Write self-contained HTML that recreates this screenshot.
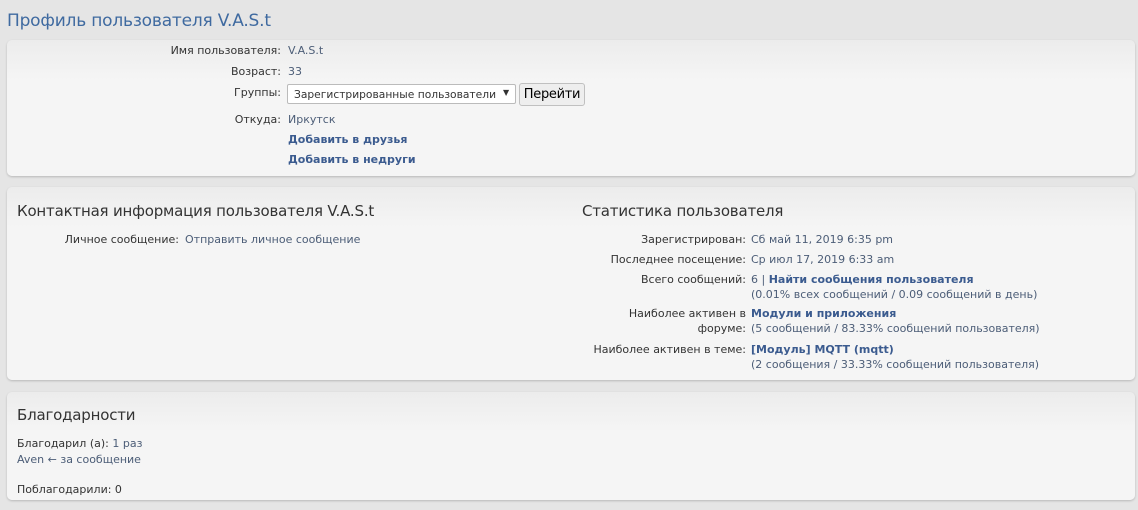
<!DOCTYPE html>
<html><head><meta charset="utf-8"><style>
*{margin:0;padding:0;box-sizing:border-box}
body{width:1138px;height:510px;background:#e5e5e5;font-family:"DejaVu Sans","Liberation Sans",sans-serif;font-size:11px;color:#333;position:relative;overflow:hidden}
.t{position:absolute;white-space:nowrap}
.p{position:absolute;left:7px;width:1128px;border-radius:5px;background:linear-gradient(#ececec,#f5f5f5 40px);box-shadow:0 1px 2px rgba(0,0,0,.2)}
.r{text-align:right}
.v{color:#4c5d77}
.b{color:#3b5b8f;font-weight:bold}
h1{position:absolute;left:7px;top:11px;font-size:17px;font-weight:normal;color:#3f6aa0;white-space:nowrap;letter-spacing:-0.2px}
.h{font-size:15px;color:#333;letter-spacing:-0.2px}
.btn{position:absolute;left:519px;top:83px;width:66px;height:23px;border:1px solid #c0c0c0;border-radius:3px;background:#eee;font-size:13px;line-height:21px;text-align:center;color:#000;letter-spacing:-0.3px}
</style></head><body>
<h1>Профиль пользователя V.A.S.t</h1>
<div class="p" style="top:40px;height:136px"></div>
<div class="p" style="top:187px;height:193px"></div>
<div class="p" style="top:392px;height:108px"></div>

<div class="t r" style="right:857px;top:44px">Имя пользователя:</div><div class="t v" style="left:288px;top:44px">V.A.S.t</div>
<div class="t r" style="right:857px;top:65px">Возраст:</div><div class="t v" style="left:288px;top:65px">33</div>
<div class="t r" style="right:857px;top:86px">Группы:</div>
<div style="position:absolute;left:287px;top:84px;width:229px;height:20px;background:#fff;border:1px solid #bbb;border-radius:2px"></div>
<div class="t" style="left:294px;top:88px;color:#333;font-size:10.7px">Зарегистрированные пользователи</div>
<div class="t" style="left:503px;top:88px;font-size:8px;color:#333">▼</div>
<div class="btn">Перейти</div>
<div class="t r" style="right:857px;top:113px">Откуда:</div><div class="t v" style="left:288px;top:113px">Иркутск</div>
<div class="t b" style="left:288px;top:133px">Добавить в друзья</div>
<div class="t b" style="left:288px;top:153px">Добавить в недруги</div>

<div class="t h" style="left:17px;top:202px">Контактная информация пользователя V.A.S.t</div>
<div class="t r" style="right:959px;top:233px">Личное сообщение:</div><div class="t v" style="left:185px;top:233px">Отправить личное сообщение</div>

<div class="t h" style="left:582px;top:202px">Статистика пользователя</div>
<div class="t r" style="right:392px;top:233px">Зарегистрирован:</div><div class="t v" style="left:751px;top:233px">Сб май 11, 2019 6:35 pm</div>
<div class="t r" style="right:392px;top:253px">Последнее посещение:</div><div class="t v" style="left:751px;top:253px">Ср июл 17, 2019 6:33 am</div>
<div class="t r" style="right:392px;top:273px">Всего сообщений:</div><div class="t v" style="left:751px;top:273px">6 | <span class="b">Найти сообщения пользователя</span></div>
<div class="t v" style="left:751px;top:288px">(0.01% всех сообщений / 0.09 сообщений в день)</div>
<div class="t r" style="right:392px;top:307px">Наиболее активен в</div><div class="t b" style="left:751px;top:307px">Модули и приложения</div>
<div class="t r" style="right:392px;top:322px">форуме:</div><div class="t v" style="left:751px;top:322px">(5 сообщений / 83.33% сообщений пользователя)</div>
<div class="t r" style="right:392px;top:343px">Наиболее активен в теме:</div><div class="t b" style="left:751px;top:343px">[Модуль] MQTT (mqtt)</div>
<div class="t v" style="left:751px;top:358px">(2 сообщения / 33.33% сообщений пользователя)</div>

<div class="t h" style="left:17px;top:406px">Благодарности</div>
<div class="t" style="left:17px;top:437px">Благодарил (а): <span class="v">1 раз</span></div>
<div class="t v" style="left:17px;top:453px">Aven ← за сообщение</div>
<div class="t" style="left:17px;top:483px">Поблагодарили: 0</div>
</body></html>
